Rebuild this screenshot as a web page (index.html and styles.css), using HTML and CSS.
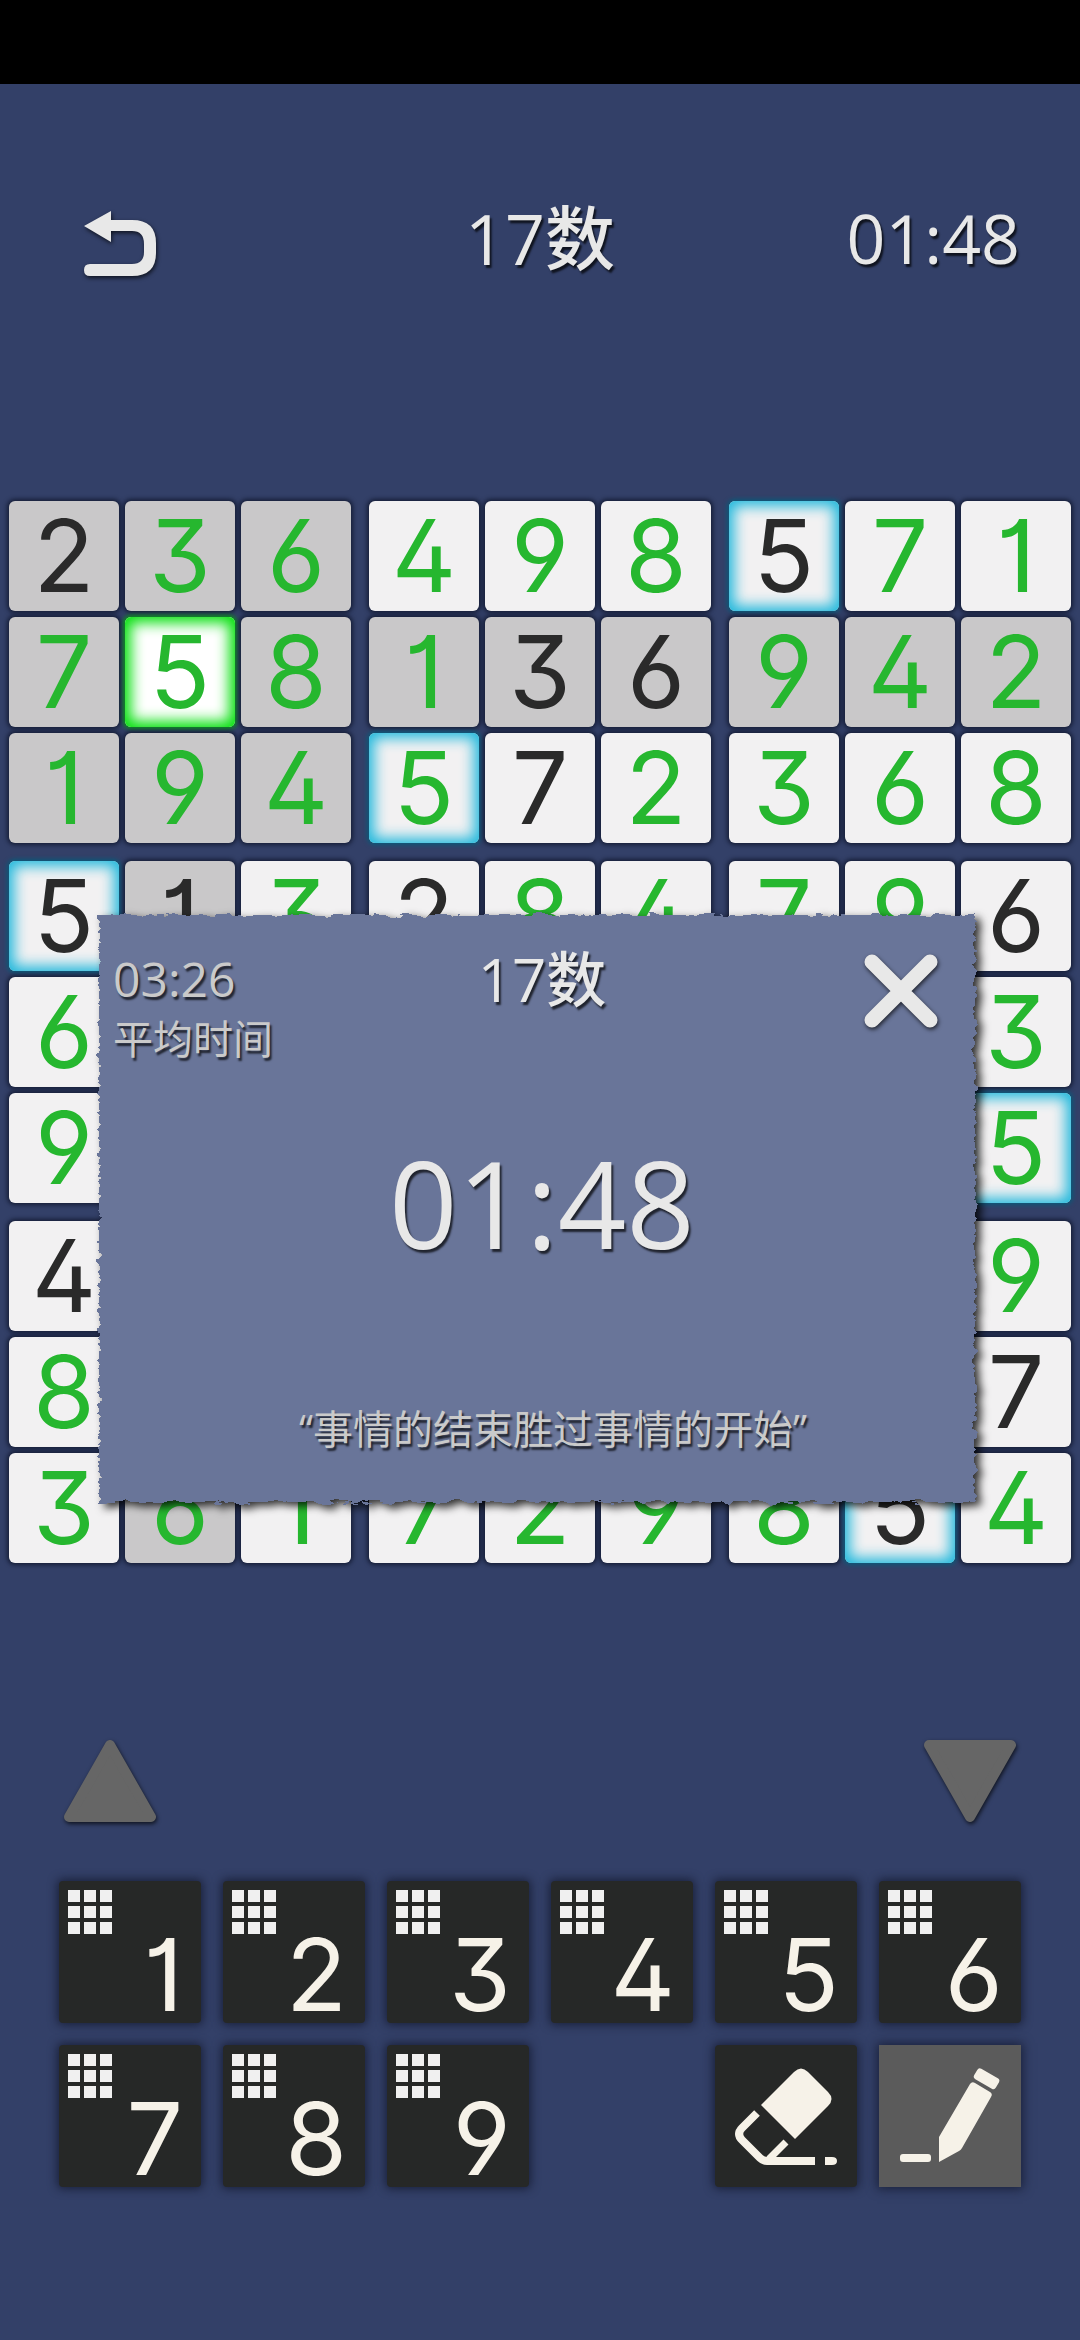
FILE: index.html
```html
<!DOCTYPE html>
<html lang="zh-CN">
<head>
    <meta charset="UTF-8">
    <meta name="viewport" content="width=device-width, initial-scale=1.0">
    <title>17数</title>
    <link rel="stylesheet" href="styles.css">
</head>
<body>
    <div class="status-bar"></div>

    <header class="topbar">
        <button class="icon-button back" aria-label="返回">
            <svg width="76" height="70" viewBox="0 0 76 70">
                <path d="M2 17 L29 2 V11 H50 Q74 11 74 34 V44 Q74 67 50 67 H8 Q2 67 2 61 Q2 55 8 55 H50 Q62 55 62 43 V35 Q62 22 50 22 H29 V33 Z" fill="#e8e8e8"/>
            </svg>
        </button>
        <h1 class="title">17数</h1>
        <time class="clock">01:48</time>
    </header>

    <main>
        <div class="board-wrap">
            <div class="board" id="board"></div>

            <section class="dialog" role="dialog" aria-labelledby="dialog-title">
                <div class="dialog-head">
                    <div class="average">
                        <time>03:26</time>
                        <span>平均时间</span>
                    </div>
                    <h2 id="dialog-title">17数</h2>
                    <button class="icon-button close" aria-label="关闭">
                        <svg width="76" height="76" viewBox="0 0 76 76">
                            <path d="M9 9 L67 67 M67 9 L9 67" stroke="#e8e8e8" stroke-width="15" stroke-linecap="round"/>
                        </svg>
                    </button>
                </div>
                <time class="result">01:48</time>
                <p class="quote">“事情的结束胜过事情的开始”</p>
            </section>
        </div>

        <div class="arrows">
            <button class="icon-button" aria-label="上一步">
                <svg width="96" height="84" viewBox="0 0 96 84">
                    <path d="M48 6 L89 78 H7 Z" fill="#666" stroke="#666" stroke-width="10" stroke-linejoin="round"/>
                </svg>
            </button>
            <button class="icon-button" aria-label="下一步">
                <svg width="96" height="84" viewBox="0 0 96 84">
                    <path d="M48 78 L89 6 H7 Z" fill="#666" stroke="#666" stroke-width="10" stroke-linejoin="round"/>
                </svg>
            </button>
        </div>

        <div class="keypad" id="keypad">
            <button class="key eraser" aria-label="橡皮擦">
                <svg viewBox="0 0 142 142" fill="#f6f2e8">
                    <path d="M46 60 L79 27 Q86 20 93 27 L113 47 Q120 54 113 61 L80 94 Z"/>
                    <path d="M42 68 L27 83 Q21 89 27 95 L45 113 Q48 116 52 116 H100" fill="none" stroke="#f6f2e8" stroke-width="8"/>
                    <path d="M71 97 L54 114" fill="none" stroke="#f6f2e8" stroke-width="7"/>
                    <path d="M110 112 H117 Q122 112 122 116 Q122 120 117 120 H110 Z"/>
                </svg>
            </button>
            <button class="key pencil" aria-label="铅笔" aria-pressed="true">
                <svg viewBox="0 0 142 142" fill="#f6f2e8">
                    <path d="M60 92 L91 39 Q93 36 96 38 L111 47 Q114 49 112 52 L83 103 Q82 105 80 106 L60 117 Z"/>
                    <rect x="95" y="28" width="25" height="12" rx="3" transform="rotate(30 108 34)"/>
                    <rect x="21" y="109" width="31" height="8" rx="3"/>
                </svg>
            </button>
        </div>
    </main>

    <!-- Rough paper edge for the dialog -->
    <svg class="defs" width="0" height="0" aria-hidden="true">
        <filter id="torn" x="-5%" y="-5%" width="110%" height="110%">
            <feTurbulence type="fractalNoise" baseFrequency="0.06 0.16" numOctaves="3" seed="4" result="noise"/>
            <feDisplacementMap in="SourceGraphic" in2="noise" scale="10" xChannelSelector="R" yChannelSelector="G"/>
        </filter>
    </svg>

    <script>
        const grid = [
            '236498571',
            '758136942',
            '194572368',
            '513284796',
            '682957413',
            '947361285',
            '475813629',
            '829645137',
            '361729854'
        ];
        // Clues as row + column
        const givens = ['00', '06', '14', '15', '24', '30', '31', '33', '38', '60', '78', '87'];
        const selected = { row: 1, col: 1 };

        const board = document.getElementById('board');
        for (let box = 0; box < 9; box++) {
            const boxEl = document.createElement('div');
            boxEl.className = 'box';
            for (let i = 0; i < 9; i++) {
                const row = Math.floor(box / 3) * 3 + Math.floor(i / 3);
                const col = (box % 3) * 3 + i % 3;
                const cell = document.createElement('button');
                const value = grid[row][col];
                cell.className = 'cell';
                cell.textContent = value;
                if (givens.includes('' + row + col)) cell.classList.add('given');
                if (row === selected.row && col === selected.col) {
                    cell.classList.add('selected');
                } else if (row === selected.row || col === selected.col || box === 0) {
                    cell.classList.add('related');
                } else if (value === grid[selected.row][selected.col]) {
                    cell.classList.add('same');
                }
                boxEl.appendChild(cell);
            }
            board.appendChild(boxEl);
        }

        const keypad = document.getElementById('keypad');
        const eraser = keypad.querySelector('.eraser');
        for (let n = 1; n <= 9; n++) {
            const key = document.createElement('button');
            key.className = 'key';
            key.innerHTML = '<span class="dots">' + '<i></i>'.repeat(9) + '</span><span class="digit">' + n + '</span>';
            keypad.insertBefore(key, eraser);
        }
    </script>
</body>
</html>
```
FILE: styles.css
```css
* {
    box-sizing: border-box;
}
body {
    margin: 0;
    min-height: 100vh;
    background: #334068;
    color: #e8e8e8;
    font-family: "Open Sans", "Noto Sans CJK SC", sans-serif;
}
h1, h2, p {
    margin: 0;
}
button {
    padding: 0;
    border: none;
    cursor: pointer;
}
.defs {
    position: absolute;
}
.status-bar {
    height: 84px;
    background: #000;
}
.icon-button {
    background: none;
    line-height: 0;
    filter: drop-shadow(1px 2px 2px rgba(0, 0, 0, 0.7));
}

/* Header */
.topbar {
    display: grid;
    grid-template-columns: 1fr auto 1fr;
    align-items: center;
    padding: 110px 60px 219px;
    text-shadow: 2px 3px 2px rgba(0, 0, 0, 0.7);
}
.back {
    justify-self: start;
    margin: 12px 0 0 22px;
}
.title {
    font-size: 70px;
    line-height: 88px;
    font-weight: 500;
}
.clock {
    justify-self: end;
    font-size: 68px;
    line-height: 88px;
}

/* Board */
.board-wrap {
    position: relative;
    padding: 0 9px;
}
.board {
    display: grid;
    grid-template-columns: repeat(3, 1fr);
    gap: 18px;
}
.box {
    display: grid;
    grid-template-columns: repeat(3, 1fr);
    gap: 6px;
}
.cell {
    aspect-ratio: 1;
    border-radius: 6px;
    background: #f2f1f2;
    color: #26b72f;
    box-shadow: 0 0 4px 2px rgba(10, 15, 35, 0.7);
    font-family: Inter, sans-serif;
    font-feature-settings: "cv01", "cv09", "ss01";
    font-size: 100px;
    font-weight: 400;
    line-height: 110px;
}
.related {
    background: #c9c8c9;
}
.given {
    color: #2a2a2a;
}
.same {
    box-shadow: inset 0 0 14px 5px #20b8dc, 0 0 4px 2px #0b5878;
}
.selected {
    background: #fff;
    box-shadow: inset 0 0 14px 6px #08e010, 0 0 4px 2px #0a8a1c;
}

/* Result dialog */
.dialog {
    position: absolute;
    top: 414px;
    left: 99px;
    right: 105px;
    padding: 34px 14px 43px;
    isolation: isolate;
    text-align: center;
    text-shadow: 2px 3px 2px rgba(0, 0, 0, 0.7);
}
.dialog::before {
    content: "";
    position: absolute;
    inset: 0;
    z-index: -1;
    background: #697599;
    filter: url(#torn) drop-shadow(5px 4px 4px rgba(0, 0, 0, 0.8));
}
.dialog-head {
    display: grid;
    grid-template-columns: 1fr auto 1fr;
    align-items: start;
}
.average {
    display: flex;
    flex-direction: column;
    color: #cacaca;
    font-size: 40px;
    line-height: 60px;
    text-align: left;
}
.average time {
    font-size: 48px;
}
.dialog h2 {
    padding-left: 10px;
    font-size: 60px;
    line-height: 60px;
    font-weight: 500;
}
.close {
    justify-self: end;
    margin: 4px 22px 0 0;
}
.result {
    display: block;
    margin: 54px 0 116px;
    padding-left: 10px;
    font-size: 120px;
    line-height: 160px;
}
.quote {
    padding-left: 32px;
    color: #cacaca;
    font-size: 40px;
    line-height: 60px;
}

/* Controls */
.arrows {
    display: flex;
    justify-content: space-between;
    padding: 176px 62px 58px;
}
.keypad {
    display: grid;
    grid-template-columns: repeat(6, 1fr);
    gap: 22px;
    padding: 0 59px;
}
.key {
    display: flex;
    flex-direction: column;
    justify-content: space-between;
    aspect-ratio: 1;
    padding: 9px 18px 8px 9px;
    border-radius: 4px;
    background: #262827;
    box-shadow: 0 0 10px 2px rgba(15, 20, 40, 0.7);
    color: #f6f2e8;
}
.dots {
    display: grid;
    grid-template-columns: repeat(3, 12px);
    grid-auto-rows: 12px;
    gap: 4px;
}
.dots i {
    background: #f0f0f0;
}
.digit {
    align-self: flex-end;
    font-family: Inter, sans-serif;
    font-feature-settings: "cv01", "cv09", "ss01";
    font-size: 100px;
    line-height: 80px;
}
.eraser {
    grid-column: 5;
    padding: 0;
}
.pencil {
    padding: 0;
    border-radius: 0;
    background: #5b5b5b;
}
```
